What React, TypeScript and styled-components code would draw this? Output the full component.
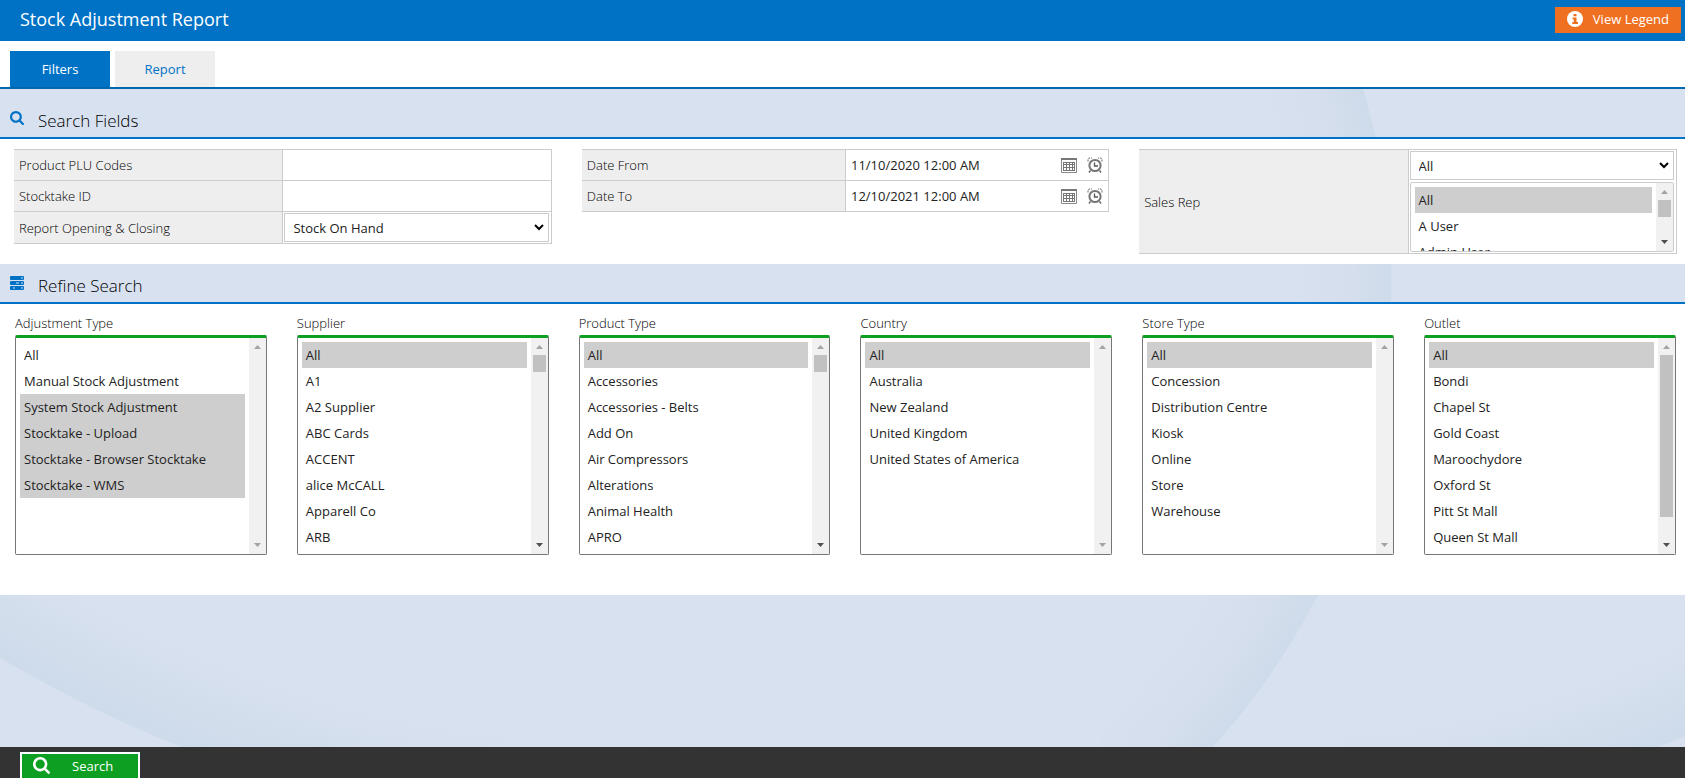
import React from "react";
import styled, { createGlobalStyle } from "styled-components";

const blue = "#0072c6";
const green = "#0d9f21";
const line = "#cccccc";

const GlobalStyle = createGlobalStyle`
  *, *::before, *::after { box-sizing: border-box; }
  body { margin: 0; }
  body, button, input, select, option {
    font-family: "Open Sans", "Noto Sans", sans-serif;
    font-size: 13px;
    color: #000;
  }
  input, select, option { color: #222; }
`;

const Page = styled.div`
  display: flex;
  flex-direction: column;
  height: 100vh;
  overflow: hidden;
  background-color: #d8e1ef;
  background-image:
    radial-gradient(circle at -395px 285px, transparent 585px, #d4deec 650px, #cedbea 686px, transparent 687px),
    radial-gradient(circle at 663px -461px, transparent 1205px, #cedbea 1300px, transparent 1301px),
    radial-gradient(circle at 52px -179px, transparent 915px, #cedbea 1003px, transparent 1004px);
  background-repeat: no-repeat;
  background-size: 100% 100%, 700px 100%, 100% 100%;
  background-position: 1100px 0, 0 0, 1220px 0;
`;

const TopBar = styled.header`
  display: flex;
  align-items: flex-start;
  justify-content: space-between;
  flex: none;
  height: 41px;
  padding: 7px 4px 0 20px;
  background: ${blue};
`;

const Title = styled.h1`
  margin: 0;
  color: #fff;
  font-size: 18px;
  font-weight: 400;
  line-height: 24px;
`;

const LegendButton = styled.button`
  display: flex;
  align-items: center;
  gap: 10px;
  height: 26px;
  padding: 0 12px 3px;
  border: 0;
  background: #f07022;
  color: #fff;
`;

const TabBar = styled.nav`
  display: flex;
  align-items: flex-end;
  flex: none;
  gap: 5px;
  height: 48px;
  padding: 0 10px;
  border-bottom: 2px solid #0067ad;
  background: #fff;
`;

const Tab = styled.a<{ $active?: boolean }>`
  width: 100px;
  height: 36px;
  background: ${(p) => (p.$active ? blue : "#eeeeee")};
  color: ${(p) => (p.$active ? "#fff" : blue)};
  line-height: 36px;
  text-align: center;
  text-decoration: none;
`;

const SectionHeader = styled.div<{ $tall?: boolean }>`
  display: flex;
  align-items: flex-end;
  flex: none;
  gap: 14px;
  height: ${(p) => (p.$tall ? 50 : 40)}px;
  padding: 0 10px 4px;
  border-bottom: 2px solid ${blue};
  svg { flex: none; margin-bottom: 8px; }
`;

const SectionTitle = styled.h2`
  margin: 0;
  font-size: 17px;
  font-weight: 300;
  line-height: 24px;
`;

const FieldsPanel = styled.section`
  display: grid;
  grid-template-columns: 51fr 50fr 51fr;
  align-items: start;
  flex: none;
  gap: 30px;
  height: 125px;
  padding: 10px 8px 0 14px;
  background: #fff;
`;

const FieldGrid = styled.div`
  border-top: 1px solid ${line};
  border-right: 1px solid ${line};
`;

const FieldRow = styled.div`
  display: grid;
  grid-template-columns: calc(50% + 1px) 1fr;
  border-bottom: 1px solid ${line};
`;

const FieldLabel = styled.label`
  display: flex;
  align-items: center;
  padding-left: 5px;
  border-right: 1px solid ${line};
  background: #eeeeee;
  font-weight: 300;
`;

const FieldValue = styled.div<{ $inset?: boolean }>`
  display: flex;
  flex-direction: column;
  gap: 2px;
  min-width: 0;
  padding: ${(p) => (p.$inset ? "1px 2px 1px 1px" : "0")};
`;

const DateValue = styled.div`
  display: flex;
  align-items: center;
  gap: 10px;
  padding-right: 5px;
`;

const TextInput = styled.input`
  width: 100%;
  min-width: 0;
  height: 30px;
  padding: 0 5px;
  border: 0;
  background: transparent;
  outline: 0;
`;

const IconButton = styled.button`
  display: flex;
  padding: 0;
  border: 0;
  background: none;
`;

const DropDown = styled.select`
  appearance: none;
  width: 100%;
  height: 29px;
  padding: 0 8px;
  border: 1px solid ${line};
  border-radius: 0;
  background: #fff url('data:image/svg+xml,<svg xmlns="http://www.w3.org/2000/svg" width="10" height="7"><path d="M1 1l4 4 4-4" fill="none" stroke="black" stroke-width="2"/></svg>') no-repeat right 4px center;
`;

const ListFrame = styled.div<{ $compact?: boolean }>`
  display: flex;
  height: ${(p) => (p.$compact ? 70 : 220)}px;
  border: 1px solid ${(p) => (p.$compact ? line : "#767676")};
  border-top: ${(p) => (p.$compact ? `1px solid ${line}` : `3px solid ${green}`)};
  border-radius: 2px;
  background: #fff;
  overflow: hidden;
`;

const ListBox = styled.select`
  flex: 1;
  min-width: 0;
  height: 100%;
  padding: 4px;
  border: 0;
  background: #fff;
  outline: 0;
  overflow-x: hidden;
  overflow-y: auto;
  scrollbar-width: none;

  option {
    height: 26px;
    padding: 4px;
    line-height: 18px;
  }
  option:checked { background: #cecece; }
`;

const ScrollBar = styled.div`
  display: flex;
  flex-direction: column;
  flex: none;
  width: 17px;
  background: #f1f1f1;
`;

const ScrollTrack = styled.div`
  flex: 1;
  padding: 0 2px;
`;

const ScrollThumb = styled.div<{ $size: number }>`
  height: ${(p) => p.$size}px;
  background: #c1c1c1;
`;

const RefinePanel = styled.section`
  display: grid;
  grid-template-columns: repeat(6, 1fr);
  align-items: start;
  flex: none;
  gap: 30px;
  height: 291px;
  padding: 9px 9px 0 15px;
  background: #fff;
`;

const ListLabel = styled.label`
  display: block;
  height: 22px;
  font-weight: 300;
  line-height: 20px;
`;

const Footer = styled.footer`
  flex: none;
  height: 31px;
  margin-top: auto;
  padding: 5px 20px 0;
  background: #333333;
  overflow: hidden;
`;

const SearchButton = styled.button`
  display: flex;
  align-items: center;
  gap: 22px;
  width: 120px;
  height: 30px;
  padding: 0 11px 3px;
  border: 2px solid #fff;
  background: ${green};
  color: #fff;
`;

const SearchIcon = ({ size, color }: { size: number; color: string }) => (
  <svg width={size} height={size} viewBox="0 0 1664 1664" aria-hidden="true">
    <path
      fill={color}
      d="M1152 704q0-185-131.500-316.500T704 256 387.500 387.500 256 704t131.500 316.500T704 1152t316.500-131.500T1152 704zm512 832q0 52-38 90t-90 38q-54 0-90-38l-343-342q-179 124-399 124-143 0-273.500-55.500t-225-150-150-225T0 704t55.500-273.500 150-225 225-150T704 0t273.500 55.500 225 150 150 225T1408 704q0 220-124 399l343 343q37 37 37 90z"
    />
  </svg>
);

const InfoIcon = () => (
  <svg width="16" height="16" viewBox="0 0 16 16" aria-hidden="true">
    <circle cx="8" cy="8" r="8" fill="#fff" />
    <path d="M6.500 3h3v2.300h-3zM5.500 6.500h4V11H11v2H5.300v-2h1.400V8.300H5.500z" fill="#f07022" />
  </svg>
);

const ServerIcon = () => (
  <svg width="14" height="14" viewBox="0 0 14 14" aria-hidden="true">
    {[0, 5, 10].map((y) => (
      <rect key={y} x="0" y={y} width="14" height="4" rx="1" fill={blue} />
    ))}
    <path d="M11 2h2M6 7h3M11 7h2M3 12h2M11 12h2" stroke="#d8e1ef" />
  </svg>
);

const CalendarIcon = () => (
  <svg width="16" height="15" viewBox="0 0 16 15" aria-hidden="true">
    <path d="M.5.500h15v14H.5z" fill="#fff" stroke="#8a8a8a" />
    <path d="M0 1h16" stroke="#777" strokeWidth="2" />
    <path d="M2 4h12v9H2z" fill="#777" />
    <path d="M3 5h2v1H3zm3 0h2v1H6zm3 0h2v1H9zm3 0h1v1h-1zM3 7h2v2H3zm3 0h2v2H6zm3 0h2v2H9zm3 0h1v2h-1zM3 10h2v2H3zm3 0h2v2H6zm3 0h2v2H9zm3 0h1v2h-1z" fill="#fff" />
  </svg>
);

const AlarmIcon = () => (
  <svg width="16" height="16" viewBox="0 0 16 16" fill="none" aria-hidden="true">
    <circle cx="8" cy="8.500" r="5.600" fill="#fff" stroke="#777" strokeWidth="2" />
    <path d="M7.500 5.500v3.500H11" stroke="#555" strokeWidth="1.300" />
    <path d="M1 4.500V2l1-1h3M15 4.500V2l-1-1h-3" stroke="#666" strokeDasharray="2 1" />
    <path d="M3.500 13.500L2 15.500M12.500 13.500L14 15.500" stroke="#666" strokeWidth="1.400" />
  </svg>
);

const Arrow = ({ down, active }: { down?: boolean; active?: boolean }) => (
  <svg width="17" height="17" viewBox="0 0 17 17" aria-hidden="true">
    <path d={down ? "M5 6h7L8.500 10z" : "M5 11h7L8.500 7z"} fill={active ? "#505050" : "#a3a3a3"} />
  </svg>
);

type ListProps = {
  id: string;
  options: string[];
  selected: string[];
  thumb?: number;
  compact?: boolean;
  label?: string;
};

const List = ({ id, options, selected, thumb, compact, label }: ListProps) => (
  <ListFrame $compact={compact}>
    <ListBox id={id} aria-label={label} multiple defaultValue={selected}>
      {options.map((o) => <option key={o}>{o}</option>)}
    </ListBox>
    <ScrollBar aria-hidden="true">
      <Arrow />
      <ScrollTrack>{thumb ? <ScrollThumb $size={thumb} /> : null}</ScrollTrack>
      <Arrow down active={!!thumb} />
    </ScrollBar>
  </ListFrame>
);

type Filter = { id: string; label: string; options: string[]; selected: string[]; thumb?: number };

const filters: Filter[] = [
  {
    id: "adjustment-type",
    label: "Adjustment Type",
    options: ["All", "Manual Stock Adjustment", "System Stock Adjustment", "Stocktake - Upload", "Stocktake - Browser Stocktake", "Stocktake - WMS"],
    selected: ["System Stock Adjustment", "Stocktake - Upload", "Stocktake - Browser Stocktake", "Stocktake - WMS"],
  },
  { id: "supplier", label: "Supplier", options: ["All", "A1", "A2 Supplier", "ABC Cards", "ACCENT", "alice McCALL", "Apparell Co", "ARB"], selected: ["All"], thumb: 17 },
  { id: "product-type", label: "Product Type", options: ["All", "Accessories", "Accessories - Belts", "Add On", "Air Compressors", "Alterations", "Animal Health", "APRO"], selected: ["All"], thumb: 17 },
  { id: "country", label: "Country", options: ["All", "Australia", "New Zealand", "United Kingdom", "United States of America"], selected: ["All"] },
  { id: "store-type", label: "Store Type", options: ["All", "Concession", "Distribution Centre", "Kiosk", "Online", "Store", "Warehouse"], selected: ["All"] },
  { id: "outlet", label: "Outlet", options: ["All", "Bondi", "Chapel St", "Gold Coast", "Maroochydore", "Oxford St", "Pitt St Mall", "Queen St Mall"], selected: ["All"], thumb: 162 },
];

const dates = [
  { id: "date-from", label: "Date From", value: "11/10/2020 12:00 AM" },
  { id: "date-to", label: "Date To", value: "12/10/2021 12:00 AM" },
];

export default function App() {
  return (
    <>
      <GlobalStyle />
      <Page>
        <TopBar>
          <Title>Stock Adjustment Report</Title>
          <LegendButton type="button">
            <InfoIcon />
            View Legend
          </LegendButton>
        </TopBar>
        <TabBar>
          <Tab href="#filters" $active>Filters</Tab>
          <Tab href="#report">Report</Tab>
        </TabBar>

        <SectionHeader $tall>
          <SearchIcon size={14} color={blue} />
          <SectionTitle>Search Fields</SectionTitle>
        </SectionHeader>
        <FieldsPanel>
          <FieldGrid>
            <FieldRow>
              <FieldLabel htmlFor="plu">Product PLU Codes</FieldLabel>
              <FieldValue><TextInput id="plu" /></FieldValue>
            </FieldRow>
            <FieldRow>
              <FieldLabel htmlFor="stocktake">Stocktake ID</FieldLabel>
              <FieldValue><TextInput id="stocktake" /></FieldValue>
            </FieldRow>
            <FieldRow>
              <FieldLabel htmlFor="opening">Report Opening &amp; Closing</FieldLabel>
              <FieldValue $inset>
                <DropDown id="opening"><option>Stock On Hand</option></DropDown>
              </FieldValue>
            </FieldRow>
          </FieldGrid>
          <FieldGrid>
            {dates.map((d) => (
              <FieldRow key={d.id}>
                <FieldLabel htmlFor={d.id}>{d.label}</FieldLabel>
                <DateValue>
                  <TextInput id={d.id} defaultValue={d.value} />
                  <IconButton type="button" aria-label={`${d.label} calendar`}><CalendarIcon /></IconButton>
                  <IconButton type="button" aria-label={`${d.label} time`}><AlarmIcon /></IconButton>
                </DateValue>
              </FieldRow>
            ))}
          </FieldGrid>
          <FieldGrid>
            <FieldRow>
              <FieldLabel htmlFor="rep">Sales Rep</FieldLabel>
              <FieldValue $inset>
                <DropDown id="rep"><option>All</option></DropDown>
                <List id="rep-list" label="Sales Rep" compact options={["All", "A User", "Admin User"]} selected={["All"]} thumb={17} />
              </FieldValue>
            </FieldRow>
          </FieldGrid>
        </FieldsPanel>

        <SectionHeader>
          <ServerIcon />
          <SectionTitle>Refine Search</SectionTitle>
        </SectionHeader>
        <RefinePanel>
          {filters.map(({ label, ...list }) => (
            <div key={list.id}>
              <ListLabel htmlFor={list.id}>{label}</ListLabel>
              <List {...list} />
            </div>
          ))}
        </RefinePanel>

        <Footer>
          <SearchButton type="button">
            <SearchIcon size={17} color="#fff" />
            Search
          </SearchButton>
        </Footer>
      </Page>
    </>
  );
}
